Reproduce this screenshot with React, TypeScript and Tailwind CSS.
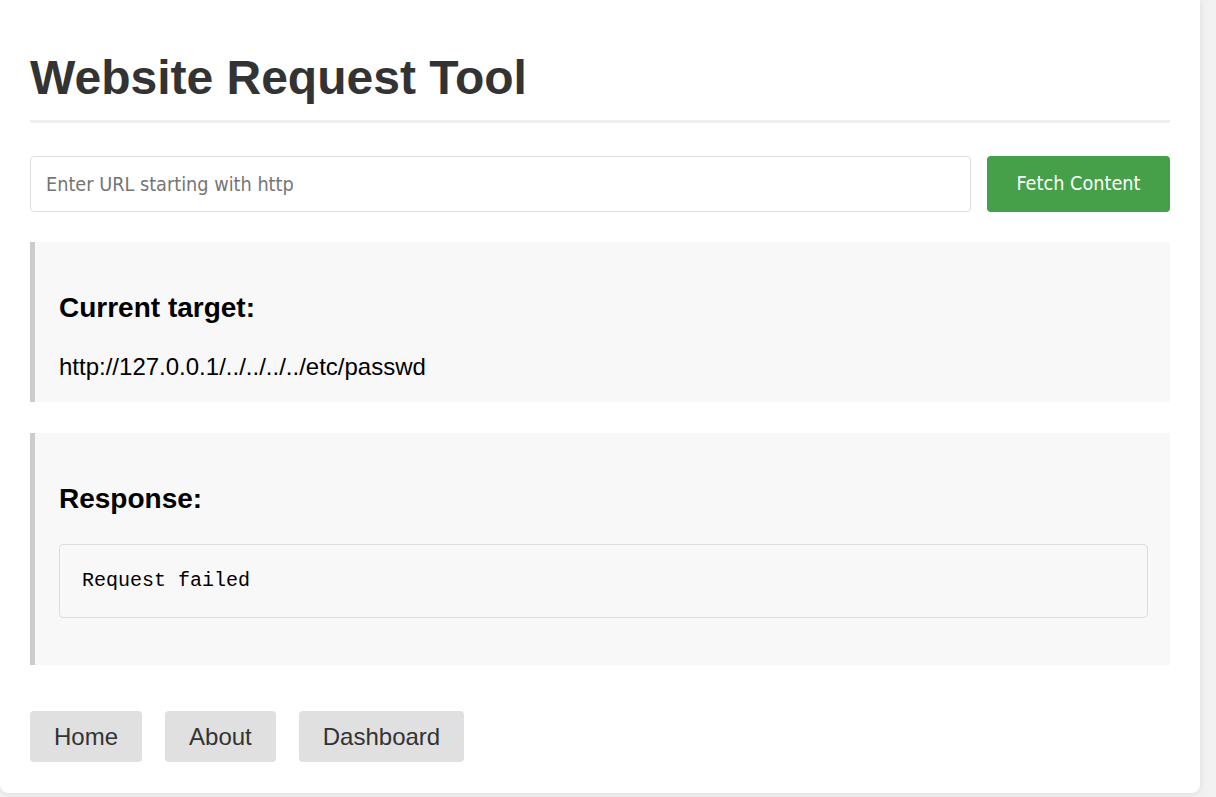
import React, { useState } from 'react';

export default function App() {
  const [url, setUrl] = useState('');

  return (
    <div className="min-h-screen bg-[#f2f2f2]" style={{ fontFamily: '"Liberation Sans", Arial, sans-serif' }}>
      <div className="w-[1200px] bg-white rounded-b-[8px] shadow-[0_0_10px_rgba(0,0,0,0.1)] px-[30px] pt-[50px] pb-[31px]">
        <h1 className="text-[48px] font-bold text-[#333] leading-[55px] pb-[15px] border-b-[3px] border-[#eee]">
          Website Request Tool
        </h1>

        <div className="flex gap-[16px] mt-[33px]">
          <input
            value={url}
            onChange={e => setUrl(e.target.value)}
            placeholder="Enter URL starting with http"
            className="flex-1 h-[56px] px-[15px] border border-[#ddd] rounded-[4px] text-[19.7px] text-[#333] placeholder:text-[#757575] outline-none"
            style={{ fontFamily: 'Tahoma, "DejaVu Sans Condensed", "Liberation Sans", sans-serif' }}
          />
          <button
            className="h-[56px] w-[183px] bg-[#45a049] text-white rounded-[4px] text-[19.7px]"
            style={{ fontFamily: 'Tahoma, "DejaVu Sans Condensed", "Liberation Sans", sans-serif' }}
          >
            Fetch Content
          </button>
        </div>

        <div className="mt-[30px] bg-[#f8f8f8] border-l-[5px] border-[#ccc] pl-[24px] pr-[22px] pt-[50px] pb-[21px]">
          <h3 className="text-[28px] font-bold text-black leading-[32px]">Current target:</h3>
          <p className="mt-[29px] text-[24px] text-black leading-[28px]">http://127.0.0.1/../../../../etc/passwd</p>
        </div>

        <div className="mt-[31px] bg-[#f8f8f8] border-l-[5px] border-[#ccc] pl-[24px] pr-[22px] pt-[50px] pb-[47px]">
          <h3 className="text-[28px] font-bold text-black leading-[32px]">Response:</h3>
          <pre
            className="mt-[29px] bg-[#f8f8f8] border border-[#ddd] rounded-[4px] px-[22px] py-[22px] text-[20px] leading-[28px] text-black"
            style={{ fontFamily: '"Liberation Mono", "Courier New", monospace' }}
          >
            Request failed
          </pre>
        </div>

        <div className="flex gap-[23px] mt-[46px]">
          {['Home', 'About', 'Dashboard'].map(label => (
            <button key={label} className="px-[24px] py-[12px] bg-[#e0e0e0] text-[#333] text-[24px] leading-[27px] rounded-[4px]">
              {label}
            </button>
          ))}
        </div>
      </div>
    </div>
  );
}
